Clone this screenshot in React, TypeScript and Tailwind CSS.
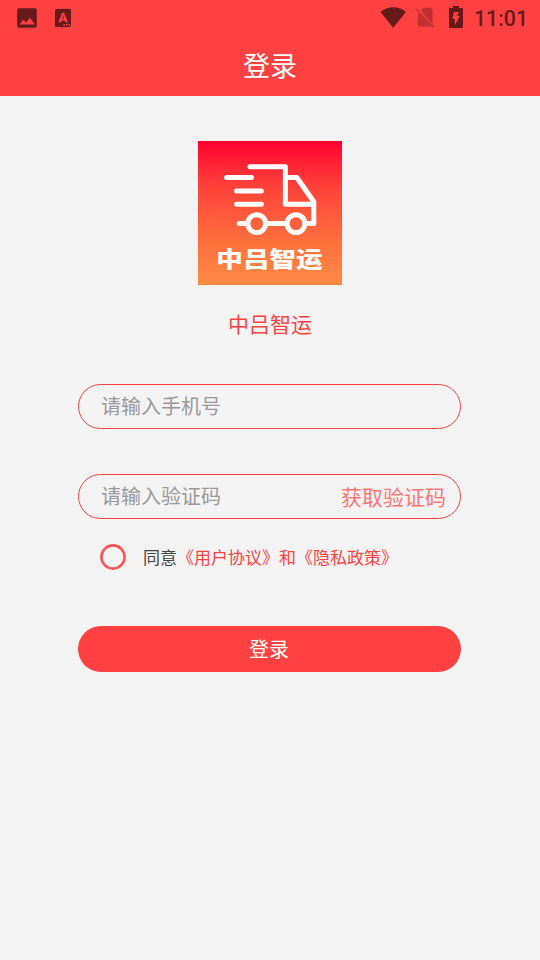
import React from "react";

function ImageIcon() {
  return (
    <svg width="20" height="20" viewBox="0 0 20 20">
      <rect x="0.2" y="0.2" width="19.6" height="19.6" rx="2" fill="#661a1a" />
      <path d="M2.6 16.4L6.3 11.6l2.7 3L13 9.8l4.8 6.6z" fill="#ff4142" />
    </svg>
  );
}

function LetterIcon() {
  return (
    <svg width="16" height="18" viewBox="0 0 16 18">
      <rect width="16" height="18" rx="1.5" fill="#661a1a" />
      <text x="8" y="13.2" textAnchor="middle" fontSize="13.2" stroke="#ff4142" strokeWidth="0.3" className="font-['Roboto',sans-serif] font-bold" fill="#ff4142">A</text>
      <path d="M8.3 15h1.7v1.6H8.3zM11 15h1.7v1.6H11zM13.6 15h1.5v1.6h-1.5z" fill="#ff4142" />
    </svg>
  );
}

function WifiIcon() {
  return (
    <svg width="26" height="22" viewBox="0 0 26 22">
      <path d="M13.2 20.8L0.5 4.9Q6 0.3 13.2 0.3T25.9 4.9z" fill="#661a1a" />
    </svg>
  );
}

function NoSimIcon() {
  return (
    <svg width="20" height="22" viewBox="0 0 20 22">
      <path d="M8 0.7h7.5a2 2 0 0 1 2 2v14.2L5.6 3.6zM2.8 5.2L16.8 19.6H4.8a2 2 0 0 1-2-2z" fill="#c03131" />
      <path d="M0.7 1.8l18 18.6" stroke="#c03131" strokeWidth="1.6" />
    </svg>
  );
}

function BatteryIcon() {
  return (
    <svg width="14" height="22" viewBox="0 0 14 22">
      <path d="M4 0h6v2h3q1 0 1 1v18q0 1-1 1H1q-1 0-1-1V3q0-1 1-1h3z" fill="#661a1a" />
      <path d="M5 6h4.8L8.3 10h2.5L5.8 19.2V12.7H3.4z" fill="#ff4142" />
    </svg>
  );
}

function Logo() {
  return (
    <svg width="144" height="144" viewBox="0 0 144 144">
      <defs>
        <linearGradient id="logoFill" x1="0" y1="0" x2="0" y2="1">
          <stop offset="0" stopColor="#ff0030" />
          <stop offset="0.3" stopColor="#ff3f38" />
          <stop offset="0.7" stopColor="#ff703e" />
          <stop offset="1" stopColor="#ff8a45" />
        </linearGradient>
      </defs>
      <rect width="144" height="144" fill="url(#logoFill)" />
      <g fill="none" stroke="#fff" strokeWidth="5" strokeLinecap="round" strokeLinejoin="round">
        <path d="M52 25.7H87.4V63.3H115.5" />
        <path d="M88 36.5H98.8L115.8 60.7V82.6H108M88.5 82.6H69M49 82.6H41.3" />
        <path d="M28.6 36.6H53.5M38.6 50H63.4M38.6 63.3H63.4" />
        <circle cx="58.7" cy="82.6" r="8.9" />
        <circle cx="98" cy="82.6" r="8.9" />
      </g>
      <text transform="translate(18.3 125.6) scale(0.985 0.79)" fontSize="27" textLength="108" fill="#fff" className="font-['Noto_Sans_CJK_SC',sans-serif] font-black">中吕智运</text>
    </svg>
  );
}

export default function App() {
  return (
    <div className="flex h-[960px] w-[540px] flex-col overflow-hidden bg-[#f3f3f3] font-['Noto_Sans_CJK_SC',sans-serif]">
      <header className="h-24 bg-[#ff4142]">
        <div className="flex h-9 items-center justify-between pr-3 pl-[17px]">
          <div className="flex items-center gap-[18px]">
            <ImageIcon />
            <LetterIcon />
          </div>
          <div className="flex items-center">
            <span className="-mt-px"><WifiIcon /></span>
            <span className="-mt-px ml-[9px]"><NoSimIcon /></span>
            <span className="-mt-[2px] ml-3.5"><BatteryIcon /></span>
            <time className="ml-[11px] pt-0.5 font-['Roboto',sans-serif] text-[21.3px] leading-9 font-medium text-[#661a1a]">11:01</time>
          </div>
        </div>
        <h1 className="text-center text-[27px] leading-[58px] font-normal text-white">登录</h1>
      </header>
      <main className="flex flex-col items-center pt-[45px]">
        <Logo />
        <p className="mt-[22px] text-[21px] leading-8 text-[#ff4142]">中吕智运</p>
        <div className="mt-[45px] mr-px flex h-[45px] w-[383px] items-center rounded-full border border-[#ff4142] pb-0.5 pl-[22px] text-xl text-[#999]">
          <span>请输入手机号</span>
        </div>
        <div className="mt-[45px] mr-px flex h-[45px] w-[383px] items-center justify-between rounded-full border border-[#ff4142] pr-3.5 pb-0.5 pl-[22px] text-xl text-[#999]">
          <span>请输入验证码</span>
          <button className="pt-0.5 text-[21px] text-[#ff7676]">获取验证码</button>
        </div>
        <div className="mt-[25px] mr-px flex h-[26px] w-[383px] items-center pl-[22px]">
          <svg width="26" height="26" viewBox="0 0 26 26">
            <circle cx="13" cy="13" r="11.6" fill="none" stroke="#ff5359" strokeWidth="2.6" />
          </svg>
          <p className="ml-[17px] text-[17px] whitespace-nowrap text-[#444]">
            同意<span className="text-[#ff4142]">《用户协议》和《隐私政策》</span>
          </p>
        </div>
        <button className="mt-14 mr-px h-[46px] w-[383px] rounded-full bg-[#ff4142] pr-px text-xl text-white">登录</button>
      </main>
    </div>
  );
}
